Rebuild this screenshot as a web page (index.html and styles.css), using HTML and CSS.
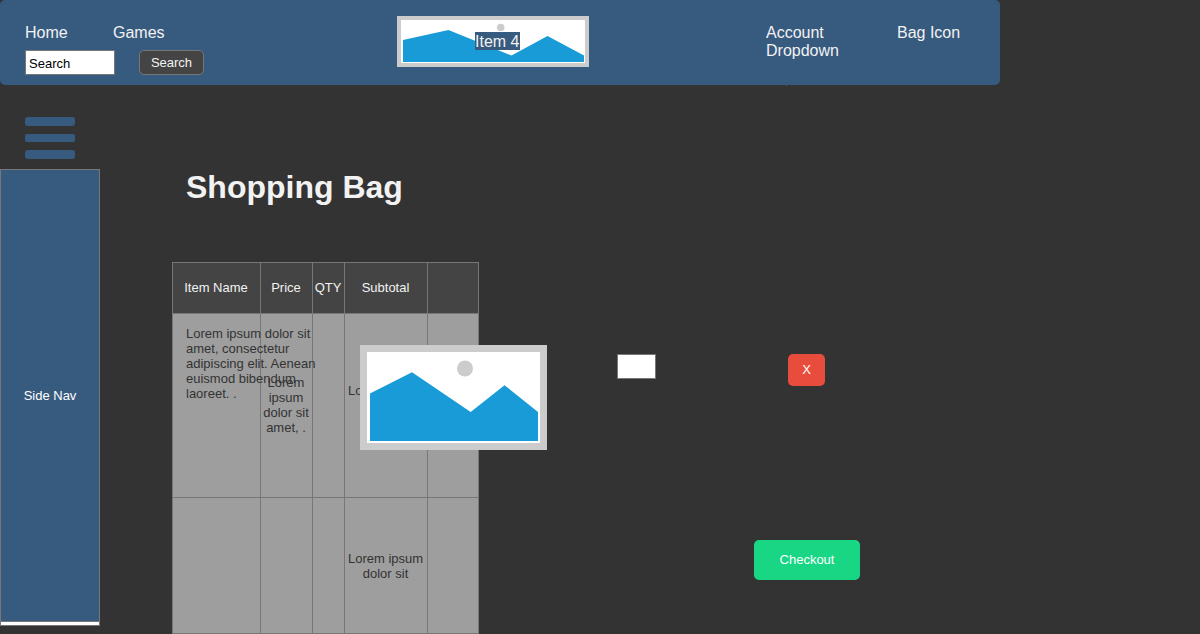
FILE: index.html
```html
<!DOCTYPE html>
<html lang="en">
<head>
<meta charset="utf-8">
<title>Shopping Bag</title>
<link rel="stylesheet" href="styles.css">
</head>
<body>
<header class="topbar">
  <div class="topbar-left">
    <nav class="links"><a class="home">Home</a><a>Games</a></nav>
    <form class="search">
      <input class="search-field" type="text" value="Search" aria-label="Search">
      <button class="search-button" type="button">Search</button>
    </form>
  </div>
  <div class="logo">
    <svg width="192" height="51" viewBox="0 0 192 51">
      <rect width="192" height="51" fill="#ccc"/>
      <rect x="4" y="4" width="184" height="43" fill="#fff"/>
      <circle cx="103.7" cy="11.5" r="3.8" fill="#ccc"/>
      <path d="M6 24 51.5 14 114.500 39.500 150.500 20 187 39.500V46H6Z" fill="#189bd7"/>
    </svg>
    <span class="logo-label">Item 4</span>
  </div>
  <a class="account">Account Dropdown</a>
  <a class="bag">Bag Icon</a>
  <span class="pointer"></span>
</header>
<div class="page">
  <aside class="side">
    <div class="burger"><i class="bar"></i><i class="bar bar-mid"></i><i class="bar"></i></div>
    <div class="side-frame"><nav class="side-nav">Side Nav</nav></div>
  </aside>
  <main class="main">
    <h1 class="title">Shopping Bag</h1>
    <div class="content">
      <div class="bag-table">
        <div class="cell head">Item Name</div>
        <div class="cell head">Price</div>
        <div class="cell head">QTY</div>
        <div class="cell head">Subtotal</div>
        <div class="cell head"></div>
        <div class="cell item"><p class="description">Lorem ipsum dolor sit amet, consectetur adipiscing elit. Aenean euismod bibendum laoreet. .</p></div>
        <div class="cell price">Lorem ipsum dolor sit amet, .</div>
        <div class="cell"></div>
        <div class="cell">Lorem ipsum dolor sit amet, .</div>
        <div class="cell"></div>
        <div class="cell"></div>
        <div class="cell"></div>
        <div class="cell"></div>
        <div class="cell">Lorem ipsum dolor sit</div>
        <div class="cell"></div>
        <svg class="product" width="187" height="105" viewBox="0 0 187 105">
          <rect width="187" height="105" fill="#ccc"/>
          <rect x="7" y="7" width="173" height="91" fill="#fff"/>
          <circle cx="105" cy="23.500" r="8" fill="#ccc"/>
          <path d="M10 48.500 52 27.300 110.700 67 144.500 40.200 178 67V96H10Z" fill="#189bd7"/>
        </svg>
      </div>
      <input class="quantity" type="text" aria-label="Quantity">
      <div class="actions">
        <button class="remove" type="button">X</button>
        <button class="checkout" type="button">Checkout</button>
      </div>
    </div>
  </main>
</div>
</body>
</html>
```
FILE: styles.css
```css
* { box-sizing: border-box; }
html, body { height: 100%; }
body {
  margin: 0;
  overflow: hidden;
  background: #333;
  color: #333;
  font: 13px/15px "Liberation Sans", Arial, sans-serif;
}
button, input { font: inherit; margin: 0; }

.topbar {
  position: relative;
  display: flex;
  align-items: flex-start;
  width: 1000px;
  height: 85px;
  padding-left: 25px;
  border-radius: 5px;
  background: #375a7f;
  color: #f2f2f2;
  font-size: 16px;
  line-height: 18px;
}
.topbar-left { width: 372px; padding-top: 24px; }
.links { display: flex; }
.home { width: 88px; }
.search { display: flex; gap: 24px; margin-top: 8px; font-size: 13px; line-height: 15px; }
.search-field {
  width: 90px;
  height: 25px;
  padding: 1px 3px 0;
  border: 1px solid #777;
  background: #fff;
  color: #000;
}
.search-button {
  width: 65px;
  height: 25px;
  padding: 0;
  border: 1px solid #777;
  border-radius: 5px;
  background: #444;
  color: #f2f2f2;
}
.logo { position: relative; width: 192px; margin-top: 16px; }
.logo svg { display: block; }
.logo-label { position: absolute; left: 78px; top: 16px; width: 45px; height: 18px; line-height: 20px; background: #375a7f; white-space: nowrap; }
.account { width: 80px; margin: 24px 0 0 177px; }
.bag { margin: 24px 0 0 51px; }
.pointer { position: absolute; left: 786px; top: 85px; width: 1px; height: 1px; background: #375a7f; }

.page { display: flex; height: 549px; }
.side { width: 100px; padding-top: 32px; }
.burger { display: flex; flex-direction: column; gap: 8px; width: 50px; margin-left: 25px; }
.bar { height: 9px; border-radius: 3px; background: #375a7f; }
.bar-mid { height: 8px; border-radius: 2px; }
.side-frame { height: 457px; margin-top: 10px; border: 1px solid #777; background: #fff; }
.side-nav {
  display: flex;
  align-items: center;
  justify-content: center;
  height: 452px;
  border-bottom: 1px solid #777;
  background: #375a7f;
  color: #fff;
}

.main { flex: 1; padding: 84px 0 0 72px; }
.title { margin: 0 0 0 14px; color: #f2f2f2; font-size: 32px; line-height: 37px; }
.content { display: flex; align-items: flex-start; margin-top: 56px; }
.bag-table {
  position: relative;
  display: grid;
  grid-template-columns: 88px 52px 32px 83px 51px;
  grid-template-rows: 51px 184px 136px;
  border-top: 1px solid #777;
  border-left: 1px solid #777;
}
.cell {
  display: flex;
  align-items: center;
  justify-content: center;
  padding: 0 3px 0 2px;
  border-right: 1px solid #777;
  border-bottom: 1px solid #777;
  background: #9e9e9e;
  text-align: center;
}
.head { padding: 0 1px 2px 0; background: #444; color: #f2f2f2; }
.price { padding-bottom: 2px; }
.item { align-items: flex-start; justify-content: flex-start; padding: 12px 0 0 13px; }
.description { flex: none; width: 132px; margin: 0; text-align: left; z-index: 1; }
.product { position: absolute; left: 187px; top: 82px; z-index: 2; }
.quantity { width: 39px; height: 25px; margin: 92px 0 0 138px; padding: 0; border: 1px solid #777; background: #fff; }
.actions { display: flex; flex-direction: column; align-items: center; gap: 154px; width: 106px; margin: 92px 0 0 98px; }
.remove { width: 37px; height: 32px; margin-right: 1px; padding: 0 0 2px; border: 0; border-radius: 5px; background: #e74c3c; color: #fff; }
.checkout { width: 106px; height: 40px; padding: 0 0 2px; border: 0; border-radius: 5px; background: #18d684; color: #fff; }
```
